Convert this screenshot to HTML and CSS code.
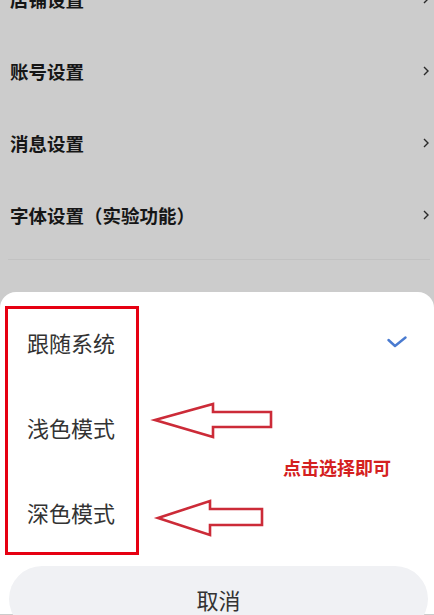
FILE: index.html
```html
<!DOCTYPE html>
<html lang="zh-CN">
<head>
    <meta charset="UTF-8">
    <meta name="viewport" content="width=device-width, initial-scale=1.0">
    <title>设置</title>
    <link rel="stylesheet" href="styles.css">
</head>
<body>

    <!-- Settings list (dimmed behind the sheet) -->
    <div class="settings">
        <div class="settings-row">
            <span>店铺设置</span>
            <svg class="chevron" viewBox="0 0 6 10"><polyline points="1,1 5,5 1,9" /></svg>
        </div>
        <div class="settings-row">
            <span>账号设置</span>
            <svg class="chevron" viewBox="0 0 6 10"><polyline points="1,1 5,5 1,9" /></svg>
        </div>
        <div class="settings-row">
            <span>消息设置</span>
            <svg class="chevron" viewBox="0 0 6 10"><polyline points="1,1 5,5 1,9" /></svg>
        </div>
        <div class="settings-row">
            <span>字体设置（实验功能）</span>
            <svg class="chevron" viewBox="0 0 6 10"><polyline points="1,1 5,5 1,9" /></svg>
        </div>
        <div class="divider"></div>
    </div>

    <!-- Bottom sheet -->
    <div class="sheet">
        <div class="option">
            <span>跟随系统</span>
            <svg class="check" viewBox="0 0 20 12"><polyline points="1.5,4 8,10 18.5,1.5" /></svg>
        </div>
        <div class="option"><span>浅色模式</span></div>
        <div class="option"><span>深色模式</span></div>

        <div class="cancel">取消</div>

        <!-- Annotations -->
        <div class="mark-box"></div>
        <svg class="arrows" viewBox="0 0 434 322">
            <polygon points="155,128 213,112 213,120 271,120 271,135 213,135 213,145" />
            <polygon points="158,226 210,209 210,217 262,217 262,233 210,233 210,243" />
        </svg>
        <div class="mark-text">点击选择即可</div>
    </div>

</body>
</html>
```

FILE: styles.css
```css
body {
    margin: 0;
    height: 615px;
    overflow: hidden;
    background-color: #cccccc;
    font-family: "Noto Sans CJK SC", "Noto Sans", sans-serif;
}

/* Settings list */
.settings {
    margin-top: -37px;
}

.settings-row {
    height: 72px;
    display: flex;
    align-items: center;
    justify-content: space-between;
    padding: 0 5px 0 10px;
    font-size: 18.5px;
    font-weight: bold;
    color: #161616;
}

.chevron {
    width: 6px;
    height: 10px;
    fill: none;
    stroke: #2a2a2a;
    stroke-width: 1.4;
}

.divider {
    height: 1px;
    margin: 8px 4px 0 8px;
    background-color: #c2c2c2;
}

/* Bottom sheet */
.sheet {
    position: relative;
    margin-top: 32px;
    height: 322px;
    padding-top: 7px;
    box-sizing: border-box;
    background-color: #fff;
    border-radius: 16px 16px 0 0;
}

.option {
    height: 85px;
    display: flex;
    align-items: center;
    justify-content: space-between;
    padding: 0 27px;
    font-size: 22px;
    color: #333;
}

.check {
    width: 20px;
    height: 12px;
    fill: none;
    stroke: #4a7bd0;
    stroke-width: 2.4;
    stroke-linecap: round;
    stroke-linejoin: round;
}

.cancel {
    margin: 12px 6px 0 9px;
    height: 66px;
    border-radius: 33px;
    background-color: #f0f1f4;
    display: flex;
    align-items: center;
    justify-content: center;
    font-size: 22px;
    color: #333;
}

/* Annotations drawn over the sheet */
.mark-box {
    position: absolute;
    left: 5px;
    top: 14px;
    width: 134px;
    height: 249px;
    box-sizing: border-box;
    border: 3px solid #e60012;
}

.arrows {
    position: absolute;
    left: 0;
    top: 0;
    width: 434px;
    height: 322px;
    fill: none;
    stroke: #cc2b38;
    stroke-width: 2.6;
}

.mark-text {
    position: absolute;
    left: 283px;
    top: 163px;
    line-height: 24px;
    font-size: 18px;
    font-weight: bold;
    color: #d42020;
}
```
